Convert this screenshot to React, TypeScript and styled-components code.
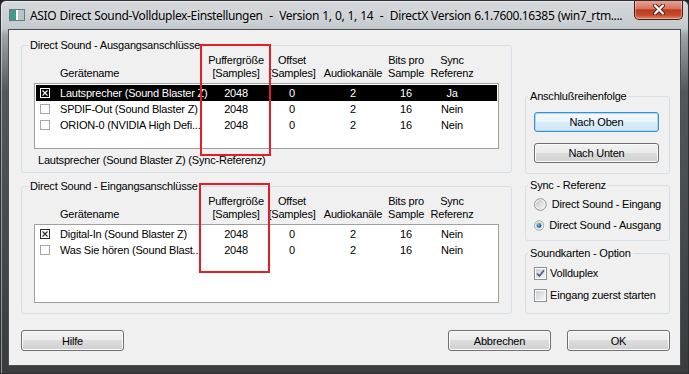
import React from "react";
import styled, { createGlobalStyle } from "styled-components";

const GlobalStyle = createGlobalStyle`
  * { box-sizing: border-box; }
  html, body { margin: 0; padding: 0; }
  body {
    background: #1f2123;
    font-family: "Liberation Sans", Arial, sans-serif;
    font-size: 11px;
    letter-spacing: -0.2px;
    color: #000;
  }
`;

const Window = styled.div`
  width: 689px;
  height: 374px;
  display: flex;
  flex-direction: column;
  border: 1px solid #2e3133;
  border-radius: 6px 6px 0 0;
  background: linear-gradient(to bottom, #d5d9dc 0px, #c4c9cd 27px, #9fa4a8 34px, #55585b 90px, #393b3d 100%);
  box-shadow: inset 1px 1px 0 rgba(255, 255, 255, 0.45);
  overflow: hidden;
`;

const TitleBar = styled.div`
  height: 28px;
  display: flex;
  align-items: center;
  padding-left: 8px;
`;

const Title = styled.div`
  flex: 1;
  min-width: 0;
  margin-left: 5px;
  font-family: "Noto Sans", "Open Sans", sans-serif;
  font-size: 12px;
  letter-spacing: -0.35px;
  word-spacing: 0.5px;
  white-space: pre;
  overflow: hidden;
  color: #000;
  text-shadow: 0 0 6px rgba(255, 255, 255, 0.9);
`;

const CloseButton = styled.div`
  align-self: flex-start;
  margin: -1px 5px 0 0;
  width: 49px;
  height: 20px;
  border: 1px solid #4c1a12;
  border-top: none;
  border-radius: 0 0 5px 5px;
  background: linear-gradient(to bottom, #e9a99b 0%, #d7745f 45%, #c2391d 52%, #c74a2c 80%, #e0886c 100%);
  box-shadow: inset 0 0 0 1px rgba(255, 255, 255, 0.35);
  display: flex;
  align-items: center;
  justify-content: center;
`;

const Body = styled.div`
  flex: 1;
  display: flex;
  padding: 0 7px 7px 7px;
`;

const Client = styled.div`
  flex: 1;
  display: flex;
  flex-direction: column;
  background: #f0f0f0;
  border: 1px solid #4b4e51;
  padding: 15px 10px 0 12px;
`;

const Main = styled.div`
  display: flex;
  gap: 13px;
  align-items: flex-start;
`;

const Column = styled.div<{ $width: number }>`
  width: ${(p) => p.$width}px;
  display: flex;
  flex-direction: column;
`;

const Group = styled.div<{ $top?: number; $bottom: number }>`
  position: relative;
  display: flex;
  flex-direction: column;
  margin-top: ${(p) => p.$top ?? 0}px;
  border: 1px solid #d5dfe5;
  border-radius: 3px;
  padding: 0 12px ${(p) => p.$bottom}px 12px;
`;

const SideGroup = styled(Group)`
  padding-left: 8px;
  padding-right: 8px;
`;

const Legend = styled.div`
  align-self: flex-start;
  margin: -7px 0 0 -6px;
  padding: 0 2px;
  line-height: 13px;
  background: #f0f0f0;
  white-space: nowrap;
`;

const cols = "24px 146px 60px 52px 70px 36px 56px";

const HeaderGrid = styled.div`
  display: grid;
  grid-template-columns: ${cols};
  margin: 2px 0 0 2px;
  line-height: 13px;
  align-items: end;
`;

const HeadCell = styled.div<{ $left?: boolean }>`
  text-align: ${(p) => (p.$left ? "left" : "center")};
  white-space: nowrap;
`;

const ListBox = styled.div<{ $height: number }>`
  margin-top: 3px;
  height: ${(p) => p.$height}px;
  background: #fff;
  border: 1px solid #a0a0a0;
  padding: 1px;
`;

const Row = styled.div<{ $selected?: boolean }>`
  display: grid;
  grid-template-columns: ${cols};
  height: 16px;
  line-height: 16px;
  background: ${(p) => (p.$selected ? "#000" : "transparent")};
  color: ${(p) => (p.$selected ? "#fff" : "#000")};
`;

const Cell = styled.div<{ $left?: boolean }>`
  text-align: ${(p) => (p.$left ? "left" : "center")};
  white-space: nowrap;
`;

const CheckCell = styled.div`
  display: flex;
  align-items: center;
  padding-left: 4px;
`;

const Caption = styled.div`
  margin-top: 5px;
  padding-left: 4px;
  line-height: 13px;
  white-space: nowrap;
`;

const Mark = styled.div<{ $left: number; $top: number; $w: number; $h: number }>`
  position: absolute;
  left: ${(p) => p.$left}px;
  top: ${(p) => p.$top}px;
  width: ${(p) => p.$w}px;
  height: ${(p) => p.$h}px;
  border: 2px solid #e31e24;
  pointer-events: none;
`;

const Button = styled.button<{ $w: number; $h: number; $mt?: number; $focused?: boolean }>`
  width: ${(p) => p.$w}px;
  height: ${(p) => p.$h}px;
  margin-top: ${(p) => p.$mt ?? 0}px;
  padding: 0;
  font: inherit;
  letter-spacing: inherit;
  color: #000;
  border-radius: 3px;
  border: 1px solid ${(p) => (p.$focused ? "#3c8fc8" : "#707070")};
  background: ${(p) =>
    p.$focused
      ? "linear-gradient(to bottom, #f4fafe 0%, #e8f4fc 50%, #d9edf9 50%, #cfe7f7 100%)"
      : "linear-gradient(to bottom, #f2f2f2 0%, #ebebeb 50%, #dddddd 50%, #cfcfcf 100%)"};
  box-shadow: inset 0 0 0 1px ${(p) => (p.$focused ? "#a9dbf7" : "#fbfbfb")};
`;

const OptionRow = styled.div<{ $mt: number; $gap: number }>`
  display: flex;
  align-items: center;
  gap: ${(p) => p.$gap}px;
  height: 14px;
  line-height: 14px;
  margin-top: ${(p) => p.$mt}px;
  white-space: nowrap;
`;

const Footer = styled.div`
  display: flex;
  justify-content: space-between;
  margin-top: 16px;
`;

const FooterRight = styled.div`
  display: flex;
  gap: 16px;
`;

type Device = {
  checked: boolean;
  name: string;
  sync: string;
  selected?: boolean;
};

const outputs: Device[] = [
  { checked: true, name: "Lautsprecher (Sound Blaster Z)", sync: "Ja", selected: true },
  { checked: false, name: "SPDIF-Out (Sound Blaster Z)", sync: "Nein" },
  { checked: false, name: "ORION-0 (NVIDIA High Defi...", sync: "Nein" },
];

const inputs: Device[] = [
  { checked: true, name: "Digital-In (Sound Blaster Z)", sync: "Nein" },
  { checked: false, name: "Was Sie hören (Sound Blast...", sync: "Nein" },
];

const windowTitle =
  "ASIO Direct Sound-Vollduplex-Einstellungen  -  Version 1, 0, 1, 14  -  DirectX Version 6.1.7600.16385 (win7_rtm....";

function AppIcon() {
  return (
    <svg width="16" height="12" viewBox="0 0 16 12">
      <rect x="0.5" y="0.5" width="15" height="11" fill="#e3e6e8" stroke="#6c7a80" />
      <rect x="1" y="1" width="6" height="10" fill="#3f9a8c" />
      <rect x="7" y="1" width="2" height="10" fill="#fdfdfd" />
      <rect x="9" y="1" width="6" height="10" fill="#b9c2c6" />
    </svg>
  );
}

function CloseGlyph() {
  return (
    <svg width="14" height="11" viewBox="0 0 14 11">
      <path d="M3 1.5 L11 9.5 M11 1.5 L3 9.5" stroke="#5a1a0c" strokeWidth="4" strokeLinecap="round" />
      <path d="M3 1.5 L11 9.5 M11 1.5 L3 9.5" stroke="#fff" strokeWidth="2.3" strokeLinecap="round" />
    </svg>
  );
}

function ListCheck({ checked, inverted }: { checked: boolean; inverted?: boolean }) {
  const c = inverted ? "#fff" : checked ? "#2b2b2b" : "#a8a8a8";
  return (
    <svg width="10" height="10" viewBox="0 0 10 10">
      <rect x="0.5" y="0.5" width="9" height="9" fill="none" stroke={c} />
      {checked && <path d="M2.5 2.5 L7.5 7.5 M7.5 2.5 L2.5 7.5" stroke={c} strokeWidth="1.1" />}
    </svg>
  );
}

function Radio({ on, id }: { on: boolean; id: string }) {
  return (
    <svg width="13" height="13" viewBox="0 0 13 13">
      <defs>
        <linearGradient id={`rb-${id}`} x1="0" y1="0" x2="1" y2="1">
          <stop offset="0" stopColor="#c2c6cb" />
          <stop offset="1" stopColor="#f7f7f7" />
        </linearGradient>
        <radialGradient id={`rd-${id}`} cx="0.4" cy="0.35" r="0.7">
          <stop offset="0" stopColor="#8fd0f6" />
          <stop offset="0.5" stopColor="#2a7ab8" />
          <stop offset="1" stopColor="#0e3d6b" />
        </radialGradient>
      </defs>
      <circle cx="6.5" cy="6.5" r="6" fill="#f4f4f4" stroke="#8e8f8f" />
      <circle cx="6.5" cy="6.5" r="4.5" fill={`url(#rb-${id})`} />
      {on && <circle cx="6.5" cy="6.5" r="3" fill={`url(#rd-${id})`} />}
    </svg>
  );
}

function WinCheck({ checked, id }: { checked: boolean; id: string }) {
  return (
    <svg width="13" height="13" viewBox="0 0 13 13">
      <defs>
        <linearGradient id={`cb-${id}`} x1="0" y1="0" x2="1" y2="1">
          <stop offset="0" stopColor="#cbcfd5" />
          <stop offset="1" stopColor="#f6f6f6" />
        </linearGradient>
      </defs>
      <rect x="0.5" y="0.5" width="12" height="12" fill="#fff" stroke="#8e8f8f" />
      <rect x="2" y="2" width="9" height="9" fill={`url(#cb-${id})`} />
      {checked && <path d="M3 6.5 L5.4 9 L10 3.2" stroke="#4a5f97" strokeWidth="1.8" fill="none" />}
    </svg>
  );
}

function DeviceHeader() {
  return (
    <HeaderGrid>
      <HeadCell />
      <HeadCell $left>Gerätename</HeadCell>
      <HeadCell>Puffergröße<br />[Samples]</HeadCell>
      <HeadCell>Offset<br />[Samples]</HeadCell>
      <HeadCell>Audiokanäle</HeadCell>
      <HeadCell>Bits pro<br />Sample</HeadCell>
      <HeadCell>Sync<br />Referenz</HeadCell>
    </HeaderGrid>
  );
}

function DeviceList({ items, height }: { items: Device[]; height: number }) {
  return (
    <ListBox $height={height}>
      {items.map((d) => (
        <Row key={d.name} $selected={d.selected}>
          <CheckCell>
            <ListCheck checked={d.checked} inverted={d.selected} />
          </CheckCell>
          <Cell $left>{d.name}</Cell>
          <Cell>2048</Cell>
          <Cell>0</Cell>
          <Cell>2</Cell>
          <Cell>16</Cell>
          <Cell>{d.sync}</Cell>
        </Row>
      ))}
    </ListBox>
  );
}

export default function App() {
  return (
    <>
      <GlobalStyle />
      <Window>
        <TitleBar>
          <AppIcon />
          <Title>{windowTitle}</Title>
          <CloseButton>
            <CloseGlyph />
          </CloseButton>
        </TitleBar>
        <Body>
          <Client>
            <Main>
              <Column $width={491}>
                <Group $bottom={5}>
                  <Legend>Direct Sound - Ausgangsanschlüsse</Legend>
                  <DeviceHeader />
                  <DeviceList items={outputs} height={66} />
                  <Caption>Lautsprecher (Sound Blaster Z) (Sync-Referenz)</Caption>
                  <Mark $left={178} $top={-2} $w={71} $h={112} />
                </Group>
                <Group $top={13} $bottom={10}>
                  <Legend>Direct Sound - Eingangsanschlüsse</Legend>
                  <DeviceHeader />
                  <DeviceList items={inputs} height={79} />
                  <Mark $left={177} $top={-4} $w={71} $h={90} />
                </Group>
              </Column>
              <Column $width={145}>
                <SideGroup $top={51} $bottom={10}>
                  <Legend>Anschlußreihenfolge</Legend>
                  <Button $w={125} $h={20} $mt={9} $focused>Nach Oben</Button>
                  <Button $w={125} $h={20} $mt={11}>Nach Unten</Button>
                </SideGroup>
                <SideGroup $top={11} $bottom={8}>
                  <Legend>Sync - Referenz</Legend>
                  <OptionRow $mt={5} $gap={5}>
                    <Radio id="in" on={false} />
                    Direct Sound - Eingang
                  </OptionRow>
                  <OptionRow $mt={7} $gap={5}>
                    <Radio id="out" on />
                    Direct Sound - Ausgang
                  </OptionRow>
                </SideGroup>
                <SideGroup $top={12} $bottom={11}>
                  <Legend>Soundkarten - Option</Legend>
                  <OptionRow $mt={6} $gap={3}>
                    <WinCheck id="duplex" checked />
                    Vollduplex
                  </OptionRow>
                  <OptionRow $mt={8} $gap={3}>
                    <WinCheck id="first" checked={false} />
                    Eingang zuerst starten
                  </OptionRow>
                </SideGroup>
              </Column>
            </Main>
            <Footer>
              <Button $w={103} $h={21}>Hilfe</Button>
              <FooterRight>
                <Button $w={103} $h={21}>Abbrechen</Button>
                <Button $w={103} $h={21}>OK</Button>
              </FooterRight>
            </Footer>
          </Client>
        </Body>
      </Window>
    </>
  );
}
